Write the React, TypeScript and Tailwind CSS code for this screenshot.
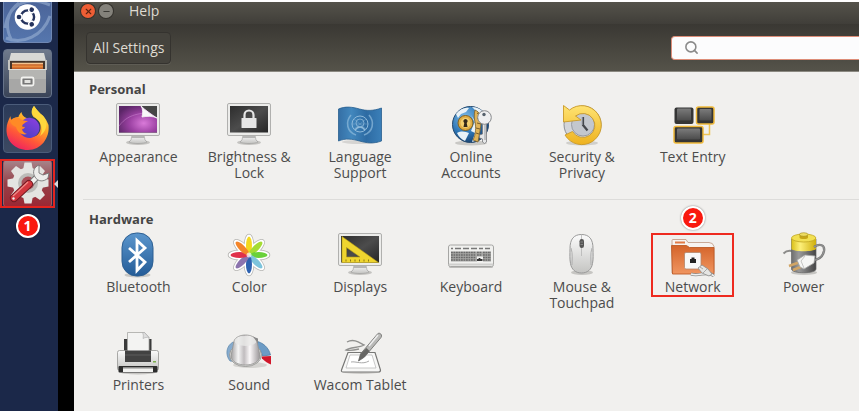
import type { ReactNode } from "react";
import { Minus, Search, X } from "lucide-react";

type SettingsItem = {
  label: string;
  icon: ReactNode;
  step?: number;
};

function Icon({ children }: { children: ReactNode }) {
  return (
    <svg viewBox="0 0 48 48" className="size-12 shrink-0" aria-hidden="true">
      {children}
    </svg>
  );
}

function Monitor({ children }: { children: ReactNode }) {
  return (
    <Icon>
      <ellipse cx="24" cy="41.5" rx="12" ry="2.5" fill="#c4c3c0" />
      <path d="M18 34h12l1 5 2 2c-3 2-15 2-18 0l2-2z" fill="url(#silver)" stroke="#9b9b99" strokeWidth=".6" />
      <path d="M18 36h12" stroke="#a5a5a3" strokeWidth="1.5" />
      <rect x="2.5" y="2.5" width="43" height="32" rx="1.5" fill="#ececea" stroke="#b0b0ae" />
      <rect x="5" y="5" width="38" height="26.5" fill="url(#screen)" />
      {children}
    </Icon>
  );
}

// gradients shared by the icons
function Gradients() {
  return (
    <svg className="absolute size-0" aria-hidden="true">
      <defs>
        <linearGradient id="silver" x1="0" y1="0" x2="0" y2="1">
          <stop offset="0" stopColor="#fbfbfb" />
          <stop offset="1" stopColor="#c4c4c2" />
        </linearGradient>
        <linearGradient id="screen" x1="0" y1="0" x2="1" y2="1">
          <stop offset="0" stopColor="#2d2d2d" />
          <stop offset=".5" stopColor="#4c4c4c" />
          <stop offset="1" stopColor="#262626" />
        </linearGradient>
        <radialGradient id="purple" cx=".65" cy=".65" r=".75">
          <stop offset="0" stopColor="#d97ad9" />
          <stop offset=".5" stopColor="#9c42a3" />
          <stop offset="1" stopColor="#5b2667" />
        </radialGradient>
        <linearGradient id="blue" x1="0" y1="0" x2="0" y2="1">
          <stop offset="0" stopColor="#5b96cd" />
          <stop offset="1" stopColor="#245c97" />
        </linearGradient>
        <linearGradient id="flag" x1="0" y1="0" x2="1" y2="0">
          <stop offset="0" stopColor="#356fa5" />
          <stop offset=".3" stopColor="#4287bd" />
          <stop offset=".65" stopColor="#2d6ba3" />
          <stop offset="1" stopColor="#3b7fb8" />
        </linearGradient>
        <radialGradient id="globe" cx=".35" cy=".3" r=".75">
          <stop offset="0" stopColor="#7dbbe8" />
          <stop offset=".6" stopColor="#2c74b4" />
          <stop offset="1" stopColor="#173f6d" />
        </radialGradient>
        <linearGradient id="gold" x1="0" y1="0" x2="0" y2="1">
          <stop offset="0" stopColor="#ffe372" />
          <stop offset="1" stopColor="#eeb21f" />
        </linearGradient>
        <linearGradient id="keycap" x1="0" y1="0" x2="0" y2="1">
          <stop offset="0" stopColor="#7b7b7b" />
          <stop offset="1" stopColor="#4b4b4b" />
        </linearGradient>
        <linearGradient id="orange" x1="0" y1="0" x2="0" y2="1">
          <stop offset="0" stopColor="#d4642a" />
          <stop offset="1" stopColor="#f09560" />
        </linearGradient>
        <linearGradient id="knob" x1="0" y1="0" x2="1" y2="0">
          <stop offset="0" stopColor="#a09e9f" />
          <stop offset=".25" stopColor="#f5f5f5" />
          <stop offset=".45" stopColor="#c0bcbe" />
          <stop offset=".65" stopColor="#fbf8f9" />
          <stop offset="1" stopColor="#989496" />
        </linearGradient>
        <linearGradient id="battery" x1="0" y1="0" x2="1" y2="0">
          <stop offset="0" stopColor="#6e6e6e" />
          <stop offset=".3" stopColor="#9a9a9a" />
          <stop offset="1" stopColor="#444" />
        </linearGradient>
        <linearGradient id="cap" x1="0" y1="0" x2="1" y2="0">
          <stop offset="0" stopColor="#d9bf17" />
          <stop offset=".35" stopColor="#fdf07a" />
          <stop offset="1" stopColor="#cfae0c" />
        </linearGradient>
        <linearGradient id="fox" x1=".8" y1="0" x2=".3" y2="1">
          <stop offset="0" stopColor="#fff14a" />
          <stop offset=".4" stopColor="#ffa927" />
          <stop offset=".7" stopColor="#ff5a37" />
          <stop offset="1" stopColor="#ef2161" />
        </linearGradient>
        <linearGradient id="foxCore" x1=".8" y1="0" x2=".2" y2="1">
          <stop offset="0" stopColor="#8a3fe0" />
          <stop offset="1" stopColor="#4a3fc0" />
        </linearGradient>
      </defs>
    </svg>
  );
}

const petals = ["#f3d81f", "#a5dc35", "#69d13a", "#7dc4dc", "#2e62b0", "#8c74ae", "#e0304a", "#f4852a"];

const personal: SettingsItem[] = [
  {
    label: "Appearance",
    icon: (
      <Monitor>
        <rect x="5" y="5" width="38" height="26.5" fill="url(#purple)" />
        <path d="M5 25C16 10 30 14 43 9" stroke="#e9a9ea" strokeOpacity=".35" fill="none" />
        <path d="M27 5h16v12z" fill="#454545" />
        <path d="M27 5c2 3 2 7 1 11 5-1 11-1 15 1C38 14 31 9 27 5z" fill="#f8f8f8" stroke="#f8f8f8" strokeWidth=".8" />
      </Monitor>
    ),
  },
  {
    label: "Brightness & Lock",
    icon: (
      <Monitor>
        <path d="M19.5 18v-4a4.5 4.5 0 0 1 9 0v4" fill="none" stroke="#e6e6e6" strokeWidth="2.2" />
        <rect x="16.5" y="17" width="15" height="10" rx=".6" fill="#e6e6e6" />
      </Monitor>
    ),
  },
  {
    label: "Language Support",
    icon: (
      <Icon>
        <ellipse cx="24" cy="41" rx="18" ry="2" fill="#d5d4d2" />
        <path d="M2.5 8c7-3 14-2 21 0s14 2 22-1v33c-8 3-15 2-22 0s-14-3-21 0z" fill="url(#flag)" stroke="#28608f" strokeWidth=".8" />
        <g fill="none" stroke="#8fbadb" strokeWidth="1">
          <circle cx="24" cy="23" r="8" />
          <circle cx="24" cy="22" r="4" strokeOpacity=".8" />
          <path d="M16 23h16M18 18l12 10M30 18L18 28" strokeOpacity=".35" />
          <path d="M15 14c-6 7-4 17 5 20M33 14c6 7 4 17-5 20" strokeWidth="1.6" strokeOpacity=".7" />
          <path d="M19 29c3-4 7-4 10 0" strokeWidth="1.5" />
        </g>
      </Icon>
    ),
  },
  {
    label: "Online Accounts",
    icon: (
      <Icon>
        <ellipse cx="24" cy="42" rx="16" ry="2.5" fill="#c9c8c5" />
        <circle cx="23.5" cy="23.5" r="18" fill="url(#globe)" stroke="#26496d" />
        <path d="M9 13c4-5 9-7 13-6l-3 4-5 2-3 4zM25 6c6 0 10 3 13 7l-5 1-4-4zM10 32c5-3 9-1 12 0l-4 8c-4-2-6-4-8-8zM24 14l4 6-4 10 4 2-3 9 3-1 3-12z" fill="#e9f2f7" />
        <path d="M28 9c5 2 7 7 6 14-1 8-2 12-3 18l-5-2c3-6 3-13 2-18-1-4-1-8 0-12z" fill="#dfb358" stroke="#80622a" strokeWidth=".8" />
        <path d="M30 12l3 2M30 17l4 1M30 22l4 1M29 27l4 1M29 32l3 1" stroke="#785c28" />
        <circle cx="18.5" cy="22" r="7.5" fill="#e0ae45" stroke="#82611f" />
        <circle cx="18.5" cy="22" r="5" fill="#f3d06f" />
        <path d="M18.5 18a2.2 2.2 0 0 1 1.2 4l.8 4h-4l.8-4a2.2 2.2 0 0 1 1.2-4z" fill="#33291a" />
        <path d="M35.5 21h4v20l-2 1.5-2-1.5v-3l-3-1v-3l3-1z" fill="#e6e7e8" stroke="#77797c" strokeWidth=".8" />
        <circle cx="37.5" cy="16.5" r="6.8" fill="#eeeff0" stroke="#888a8d" />
        <circle cx="37" cy="13.5" r="1.7" fill="#55616c" />
        <path d="M38 23v16" stroke="#999b9e" />
      </Icon>
    ),
  },
  {
    label: "Security & Privacy",
    icon: (
      <Icon>
        <ellipse cx="24" cy="42" rx="16" ry="2.5" fill="#d0cfcc" />
        <circle cx="24.5" cy="23.5" r="18.5" fill="#d3d5da" stroke="#8c8f95" />
        <circle cx="25" cy="23.5" r="11.5" fill="#c3c7ce" stroke="#989ca4" />
        <path d="M5.5 4.5V21L23 19l-5.500-4a12 12 0 1 1-3 15.500L7 34a19.500 19.500 0 1 0 4.500-25z" fill="url(#gold)" stroke="#c99a28" strokeWidth=".9" />
        <path d="M25 16v8l4.500 5.500" fill="none" stroke="#45484e" strokeWidth="2.2" />
        <path d="M24.5 16v8" stroke="#7c8088" />
      </Icon>
    ),
  },
  {
    label: "Text Entry",
    icon: (
      <Icon>
        <path d="M40.5 22v11.5H34" fill="none" stroke="#efc456" strokeWidth="1.5" />
        <rect x="5.5" y="6.5" width="19" height="16.5" rx="2" fill="#353535" />
        <rect x="8" y="7.5" width="14" height="12" rx="1" fill="url(#keycap)" />
        <rect x="27.5" y="6" width="17.5" height="17" rx="2" fill="#353535" stroke="#f0b93a" strokeWidth="1.5" />
        <rect x="30.5" y="8" width="12" height="11.5" rx="1" fill="url(#keycap)" />
        <rect x="5" y="25.5" width="29" height="16.5" rx="2" fill="#353535" stroke="#f0b93a" strokeWidth="1.5" />
        <rect x="8" y="27.5" width="23" height="11" rx="1" fill="url(#keycap)" />
      </Icon>
    ),
  },
];

const hardware: SettingsItem[] = [
  {
    label: "Bluetooth",
    icon: (
      <Icon>
        <ellipse cx="23.5" cy="44" rx="13" ry="2.5" fill="#c9c8c5" />
        <rect x="8" y="2" width="31" height="43" rx="14.5" fill="url(#blue)" stroke="#2d5f92" />
        <path d="M15 17l16 14-8 8.500V9.500l8 7.500-16 14" fill="none" stroke="#fff" strokeWidth="2.8" />
      </Icon>
    ),
  },
  {
    label: "Color",
    icon: (
      <Icon>
        {petals.map((fill, i) => (
          <ellipse key={fill} cx="24" cy="14.5" rx="4.5" ry="11" fill="#fff" stroke="#b5b4b1" strokeWidth="1.5" transform={`rotate(${i * 45} 24 24)`} />
        ))}
        {petals.map((fill, i) => (
          <ellipse key={fill} cx="24" cy="14.5" rx="4.5" ry="11" fill="#fff" transform={`rotate(${i * 45} 24 24)`} />
        ))}
        {petals.map((fill, i) => (
          <ellipse key={fill} cx="24" cy="14.5" rx="3" ry="9" fill={fill} transform={`rotate(${i * 45} 24 24)`} />
        ))}
        <circle cx="24" cy="24" r="2.5" fill="#fff" fillOpacity=".7" />
      </Icon>
    ),
  },
  {
    label: "Displays",
    icon: (
      <Monitor>
        <path d="M6 5.500v26h36.500zM10.500 16.500L24 26H10.500z" fill="#efd52f" fillRule="evenodd" stroke="#b39a16" strokeWidth=".6" />
        <path d="M10 30.500v-2M14.500 30.500v-2M19 30.500v-2M23.500 30.500v-2M28 30.500v-2M32.500 30.500v-2" stroke="#8d7a12" />
      </Monitor>
    ),
  },
  {
    label: "Keyboard",
    icon: (
      <Icon>
        <rect x="2" y="34" width="44" height="3" rx="1.5" fill="#bdbcba" />
        <rect x="1.5" y="14" width="45" height="21.5" rx="2" fill="#f0f0ee" stroke="#a6a6a4" />
        <path d="M2 33.500h44" stroke="#cfcfcd" strokeWidth="2" />
        <path d="M4 17.500h2m2 0h6m2 0h6m2 0h6m2 0h4m2 0h5" stroke="#777" strokeWidth="1.5" />
        <path d="M4 20.500h26v10H4zM36 20.500h8v10h-8zM30 20.500h6v5h-6z" fill="#a8a8a6" />
        <g stroke="#6a6a6a" strokeWidth="1.6" strokeDasharray="1.800 .7">
          <path d="M4 21.500h25M4 24h25M4 26.500h25M4 29h25" />
          <path d="M36 21.500h8M36 24h8M36 26.500h8M36 29h8" />
          <path d="M30 21.500h5M30 24h5" />
        </g>
        <path d="M30 29h5.500M32.500 27v3" stroke="#333" strokeWidth="1.8" />
      </Icon>
    ),
  },
  {
    label: "Mouse & Touchpad",
    icon: (
      <Icon>
        <ellipse cx="24" cy="41.5" rx="11" ry="2.5" fill="#c6c5c2" />
        <path d="M23.500 3.500c8 0 11.500 5 11.500 14 0 6 .5 10-.5 15-1 6-5 9.500-11 9.500s-10-3.500-11-9.500c-1-5-.5-9-.5-15 0-9 3.500-14 11.500-14z" fill="url(#silver)" stroke="#999" />
        <path d="M13 17c2 6 1 12 1 17M34 17c-2 6-1 12-1 17" fill="none" stroke="#b0b0b0" />
        <path d="M23.500 4v21" stroke="#b5b5b5" strokeWidth=".8" />
        <rect x="21.5" y="8" width="4.5" height="9" rx="2.2" fill="#555" />
        <path d="M22.500 11h2.500M22.500 13.500h2.500" stroke="#999" strokeWidth=".7" />
      </Icon>
    ),
  },
  {
    label: "Network",
    step: 2,
    icon: (
      <Icon>
        <path d="M3 42V9.500q0-1 1-1h13l2 3h21q4 0 5 4v26z" fill="#f7f3f0" stroke="#c4a08c" strokeWidth=".9" />
        <path d="M6 11.500h10" stroke="#e17a46" strokeWidth="2" />
        <path d="M2.500 14.500h15l3 2H45V43H3.500z" fill="url(#orange)" stroke="#bd5a26" strokeWidth=".9" />
        <rect x="15.5" y="21.5" width="16.5" height="16.5" rx="1.5" fill="#f8f8f8" stroke="#b3866c" strokeWidth=".8" />
        <path d="M21 32v-4h1.500v-1.500h3V28H27v4z" fill="#222" />
        <path d="M45 45c-6-6-15 1-23-2" fill="none" stroke="#8d8d8b" strokeWidth="3" />
        <path d="M45 45c-6-6-15 1-23-2" fill="none" stroke="#eee" strokeWidth="1.5" />
        <path d="M29 37l4-3 6 4 4 5-3 2-7-3z" fill="#e5e5e3" stroke="#8d8d8b" strokeWidth=".8" />
        <path d="M31 36l3 2M34 42l4-4" stroke="#999" strokeWidth=".8" />
      </Icon>
    ),
  },
  {
    label: "Power",
    icon: (
      <Icon>
        <ellipse cx="24" cy="41.5" rx="13" ry="2.5" fill="#c6c5c2" />
        <path d="M3.500 22.500c3-3 7-3 10-2" fill="none" stroke="#8c8c8a" strokeWidth="2" />
        <path d="M11.500 8v30c0 5 24.500 5 24.500 0V8z" fill="url(#battery)" stroke="#666" strokeWidth=".7" />
        <path d="M11.500 7v11c2 3 22 3 24.500 0V7z" fill="url(#cap)" />
        <ellipse cx="23.7" cy="7" rx="12.2" ry="4" fill="#f2e052" stroke="#c0a622" strokeWidth=".8" />
        <path d="M19.500 3.500v3c0 2 8.500 2 8.500 0v-3z" fill="#c6a616" />
        <ellipse cx="23.7" cy="3.5" rx="4.2" ry="1.8" fill="#eedd62" stroke="#a18a16" strokeWidth=".6" />
        <path d="M34 16c6-4 11-2 10 4-1 5-5 8-9 9" fill="none" stroke="#777" strokeWidth="2.4" />
        <path d="M34 16c6-4 11-2 10 4-1 5-5 8-9 9" fill="none" stroke="#a5a5a3" strokeWidth=".8" />
        <path d="M20 31l-11 4M23 35l-10 4" stroke="#d2a565" strokeWidth="2.6" />
        <path d="M17 29l8-5 10 1-1 7-10 6-4-2z" fill="#f6f6f4" stroke="#a5a5a3" strokeWidth=".8" />
        <path d="M25 25l-4 5 3 7" fill="none" stroke="#c5c5c3" />
      </Icon>
    ),
  },
  {
    label: "Printers",
    icon: (
      <Icon>
        <ellipse cx="24" cy="43" rx="18" ry="2.5" fill="#c6c5c2" />
        <path d="M10 10h5v13h-5zM33 10h4.500v13H33z" fill="#3a3a3a" />
        <path d="M3.500 23.500q0-2 2-2h37q2 0 2 2v16q0 1.500-1.500 1.500H5q-1.500 0-1.500-1.500z" fill="url(#silver)" stroke="#959593" strokeWidth=".8" />
        <path d="M13.500 3.500h17l4.500 5V23H13.500z" fill="#f3f3f2" stroke="#a7a7a5" strokeWidth=".8" />
        <path d="M28.500 3.500c1 2 1 4 .5 6 2-1 4-1.500 6-1l-4.500-5z" fill="#ddd" stroke="#aaa" strokeWidth=".6" />
        <rect x="11" y="21.5" width="26" height="11.5" fill="#424242" />
        <path d="M11 26h26" stroke="#5c5c5c" />
        <rect x="39" y="32" width="3" height="1.5" fill="#7cad4d" />
        <rect x="4.5" y="37" width="39" height="6.5" rx="1" fill="#2c2c2c" />
        <rect x="9" y="38.5" width="30" height="4.5" fill="#f2f2f0" />
        <path d="M9 39h30" stroke="#888" />
      </Icon>
    ),
  },
  {
    label: "Sound",
    icon: (
      <Icon>
        <ellipse cx="25" cy="36" rx="17" ry="3" fill="#d4d3d0" />
        <path d="M5 32C0 26 1 17 8 13l6 4v16z" fill="#86abce" stroke="#5d86ab" strokeWidth=".7" />
        <path d="M30 12c8 1 14 7 15.500 14l-8 1c-1-4-3-7-6-9z" fill="#6c9bc5" stroke="#44749e" strokeWidth=".7" />
        <path d="M36.500 27.500l9.500-.5v8.500c-3-1-6-3-9-6z" fill="#d1172a" />
        <ellipse cx="20.5" cy="26" rx="16" ry="11.5" fill="#d8d8d7" stroke="#8f8f8d" strokeWidth=".8" />
        <path d="M9 12c3-8 20-8 23 0l3 15c-1 12-28 12-29 0z" fill="url(#knob)" stroke="#949492" strokeWidth=".8" />
        <ellipse cx="20.5" cy="12" rx="11" ry="5" fill="#e8e8e7" fillOpacity=".8" />
        <path d="M28 7.500l5 2v5z" fill="#888" />
      </Icon>
    ),
  },
  {
    label: "Wacom Tablet",
    icon: (
      <Icon>
        <ellipse cx="25" cy="42.5" rx="19" ry="2.5" fill="#cccbc8" />
        <path d="M12 23.500h27l5.500 17.500q0 2-2 2H7q-2 0-1.500-2z" fill="#f7f7f6" stroke="#777775" strokeWidth="1.2" />
        <path d="M14 26h22l4 13H10z" fill="#fff" stroke="#bbb" strokeWidth=".8" />
        <path d="M11 13c7-4 13 1 17 3-5 3-14 2-18 5 4 1 9 0 13-1" fill="none" stroke="#91918f" strokeWidth="1.4" />
        <path d="M15 33c5-1 11 3 18-1" fill="none" stroke="#aaa" />
        <path d="M22.500 32l2-7L41 5.500c2-3 6 0 4 3L28.500 28z" fill="#b9b9b7" stroke="#747472" strokeWidth=".9" />
        <path d="M22.500 32l2-7 6-6 3 3-5 6z" fill="#666664" />
        <path d="M33 17l9-11" stroke="#eee" strokeWidth="1.5" />
      </Icon>
    ),
  },
];

const gearTeeth = [0, 45, 90, 135, 180, 225, 270, 315];

const launcher = [
  {
    label: "Search your computer",
    className: "-mt-2 bg-linear-to-b from-[#4a6296] to-[#5576ad] border-[#6f87b3]",
    icon: (
      <>
        <path d="M2 34C6 8 26 2 47 11M3 44C20 51 40 42 47 22M9 47c-8-14-5-30 7-38" fill="none" stroke="#a8bddc" strokeOpacity=".5" strokeWidth="3" />
        <circle cx="24.5" cy="23" r="12.8" fill="#fff" />
        <circle cx="24.5" cy="23" r="6.6" fill="none" stroke="#26345e" strokeWidth="2.4" />
        {[60, 180, 300].map((angle) => (
          <g key={angle} transform={`rotate(${angle} 24.5 23)`}>
            <circle cx="32.5" cy="23" r="3.4" fill="#fff" />
            <circle cx="33" cy="23" r="2.3" fill="#26345e" />
          </g>
        ))}
      </>
    ),
  },
  {
    label: "Files",
    className: "bg-linear-to-b from-[#6f7a8c] to-[#3a4458] border-[#66738a]",
    icon: (
      <>
        <path d="M8 4h33l2 8H6z" fill="#d9d9d5" />
        <rect x="5" y="11" width="39" height="10" fill="#c4c4c0" />
        <rect x="7" y="12" width="35" height="9" fill="#45352b" />
        <rect x="9" y="14" width="31" height="6" fill="#c2602a" />
        <path d="M9 14.500h31" stroke="#f4c48f" strokeWidth="1.5" />
        <path d="M9 17.500h31" stroke="#e98a3d" strokeWidth="2" />
        <path d="M6 20h37v22.500q0 1.500-1.500 1.500h-34Q6 44 6 42.500z" fill="#b5b5b2" />
        <path d="M6 20.500h37" stroke="#deded9" />
        <path d="M6 30h37v12.500q0 1.500-1.500 1.500h-34Q6 44 6 42.500z" fill="#999" fillOpacity=".5" />
        <rect x="18.5" y="28.5" width="12" height="8" rx="1.5" fill="#777" stroke="#f2f2ef" strokeWidth="1.8" />
        <rect x="21.5" y="31" width="6" height="3" fill="#e2e2df" />
      </>
    ),
  },
  {
    label: "Firefox",
    className: "bg-linear-to-b from-[#2b3a58] to-[#3c4962] border-[#4b5c7a]",
    icon: (
      <>
        <path
          d="M31 2c2 3 4 5 6 8 4 1 7 7 8.500 11C47 34 38 46 25 46 12 46 3 37 3.500 25c0-5 2-9 4-13 0 2 .5 3 1 4 2-2 4-3 7-3 0-1 1-3 3-5 0 2 2 5 5 6 3 0 3 3 0 4-2 1-4 3-4 5 2-1 4 0 5 1-2 1-4 5 1 8 7 3 13-3 12-10 0-5-3-7-7-9-3-4-2-8 .5-11z"
          fill="url(#fox)"
        />
        <path d="M17 21c2-5 6-8 11-7 6 1 10 7 8 13-2 5-8 9-14 6-4-2-6-5-5-8 2 1 4 0 5-2z" fill="url(#foxCore)" />
        <path d="M7 17c2-3 6-4 9-3 2 2 5 3 9 3-3 2-6 3-6 6-1 3 2 6 5 7-6 2-10-3-11-7-3-1-5-3-6-6z" fill="#ff8a26" />
        <path d="M31 2c-4 5-1 10 4 14 4 4 5 11 2 16 6-4 8-12 5-17-3-5-8-8-11-13z" fill="#ffd83d" />
      </>
    ),
  },
  {
    label: "System Settings",
    className: "bg-linear-to-b from-[#a5868d] via-[#963f48] to-[#9b2633] border-[#a85a62]",
    active: true,
    icon: (
      <>
        <g fill="#e4e4e1">
          {gearTeeth.map((angle) => (
            <path key={angle} d="M20 11l1.500-7.500h7L30 11z" transform={`rotate(${angle} 25 24)`} />
          ))}
          <circle cx="25" cy="24" r="15.5" />
        </g>
        <circle cx="25" cy="24" r="10" fill="#bcbcb9" />
        <circle cx="25" cy="24" r="6.5" fill="#a85059" />
        <path d="M26 26l9-9" stroke="#777" strokeWidth="6.5" />
        <path d="M26 26l9-9" stroke="#f1f1ef" strokeWidth="4.5" />
        <path d="M36 6c-5 2-7 7-4 12s9 5 13 1l1-5-6 2-4-2v-3z" fill="#ededeb" stroke="#777" strokeWidth=".9" />
        <path d="M11 39l15-14" stroke="#701820" strokeWidth="8" strokeLinecap="round" />
        <path d="M11 39l15-14" stroke="#d1373f" strokeWidth="6.2" strokeLinecap="round" />
        <path d="M10 37l15-14" stroke="#ef8a86" strokeWidth="1.2" />
        <circle cx="10.5" cy="39.5" r="1.2" fill="#eee" />
      </>
    ),
  },
];

function StepBadge({ step }: { step: number }) {
  return (
    <span className="flex size-6 items-center justify-center rounded-full border-2 border-white bg-[#f9190f] text-sm leading-none font-bold text-white shadow-[0_0_2px_rgba(0,0,0,0.5)]">
      {step}
    </span>
  );
}

function SettingsGroup({ title, items }: { title: string; items: SettingsItem[] }) {
  return (
    <section>
      <h2 className="pl-1.5 text-[13px] leading-[18px] font-bold text-[#454545]">{title}</h2>
      <div className="mt-[3px] grid grid-cols-[repeat(auto-fill,minmax(110px,1fr))] gap-y-[18px]">
        {items.map((item) => (
          <button key={item.label} type="button" className="relative flex flex-col items-center justify-start">
            {item.icon}
            <span className="max-w-24 text-sm leading-4 text-[#4c4c4c]">{item.label}</span>
            {item.step && (
              <>
                <span className="absolute inset-x-3.5 top-0.5 h-16 border-2 border-[#ee2a1f]" />
                <span className="absolute -top-[25px]">
                  <StepBadge step={item.step} />
                </span>
              </>
            )}
          </button>
        ))}
      </div>
    </section>
  );
}

export default function App() {
  return (
    <div className="flex min-h-screen bg-white pt-0.5 font-['Open_Sans',sans-serif]">
      <Gradients />
      <nav aria-label="Launcher" className="w-[58px] shrink-0 overflow-hidden bg-[#1b2849] pl-[3px]">
        <div className="flex w-[49px] flex-col items-center gap-1.5">
          {launcher.map((app) => (
            <button key={app.label} type="button" aria-label={app.label} className={`relative size-[49px] shrink-0 rounded-[4px] border ${app.className}`}>
              <svg viewBox="0 0 49 49" className="absolute -inset-px size-[49px]" aria-hidden="true">
                {app.icon}
              </svg>
              {app.active && (
                <>
                  <span className="absolute -inset-x-1 -inset-y-px border-2 border-[#e3241f]" />
                  <span className="absolute top-5 -right-[7px] border-y-4 border-r-4 border-y-transparent border-r-[#d5d8de]" />
                </>
              )}
            </button>
          ))}
          <StepBadge step={1} />
        </div>
      </nav>
      <div className="w-4 shrink-0 bg-black" />

      <main className="min-w-0 flex-1 bg-[#f1f0ee]">
        <header className="text-[#dfdbd2]">
          <div className="flex h-[22px] items-center gap-1 bg-linear-to-b from-[#55534b] to-[#403e39] pl-[7px]">
            <button type="button" aria-label="Close" className="mb-1 flex size-3.5 items-center justify-center rounded-full bg-[#ee5e35] text-[#5a2411] ring-1 ring-[#33312c]">
              <X size={9} strokeWidth={3} />
            </button>
            <button type="button" aria-label="Minimize" className="mb-1 flex size-3.5 items-center justify-center rounded-full bg-[#84827b] text-[#3b3a35] ring-1 ring-[#33312c]">
              <Minus size={9} strokeWidth={3} />
            </button>
            <h1 className="mb-1 pl-3 text-sm leading-4">Help</h1>
          </div>
          <div className="flex h-12 items-center justify-between border-b border-[#8b8981] bg-linear-to-b from-[#3a3833] to-[#55534a] pl-3">
            <button type="button" className="h-8 rounded-[4px] border border-[#35332f] bg-[#45433d] px-1.5 text-sm shadow-[0_1px_0_rgba(255,255,255,0.08)]">
              All Settings
            </button>
            <label className="flex h-6 w-47 items-center rounded-l-[4px] border border-r-0 border-[#dd8d78] bg-[#fcfcfd] pl-3">
              <Search size={15} strokeWidth={2.5} className="shrink-0 text-[#8a8a8a]" />
              <input type="search" aria-label="Search settings" className="min-w-0 flex-1 px-2 text-sm text-[#4c4c4c] outline-none" />
            </label>
          </div>
        </header>

        <div className="pt-2 pl-[9px]">
          <SettingsGroup title="Personal" items={personal} />
          <hr className="mt-[18px] mb-2.5 border-[#dddcda]" />
          <SettingsGroup title="Hardware" items={hardware} />
        </div>
      </main>
    </div>
  );
}
